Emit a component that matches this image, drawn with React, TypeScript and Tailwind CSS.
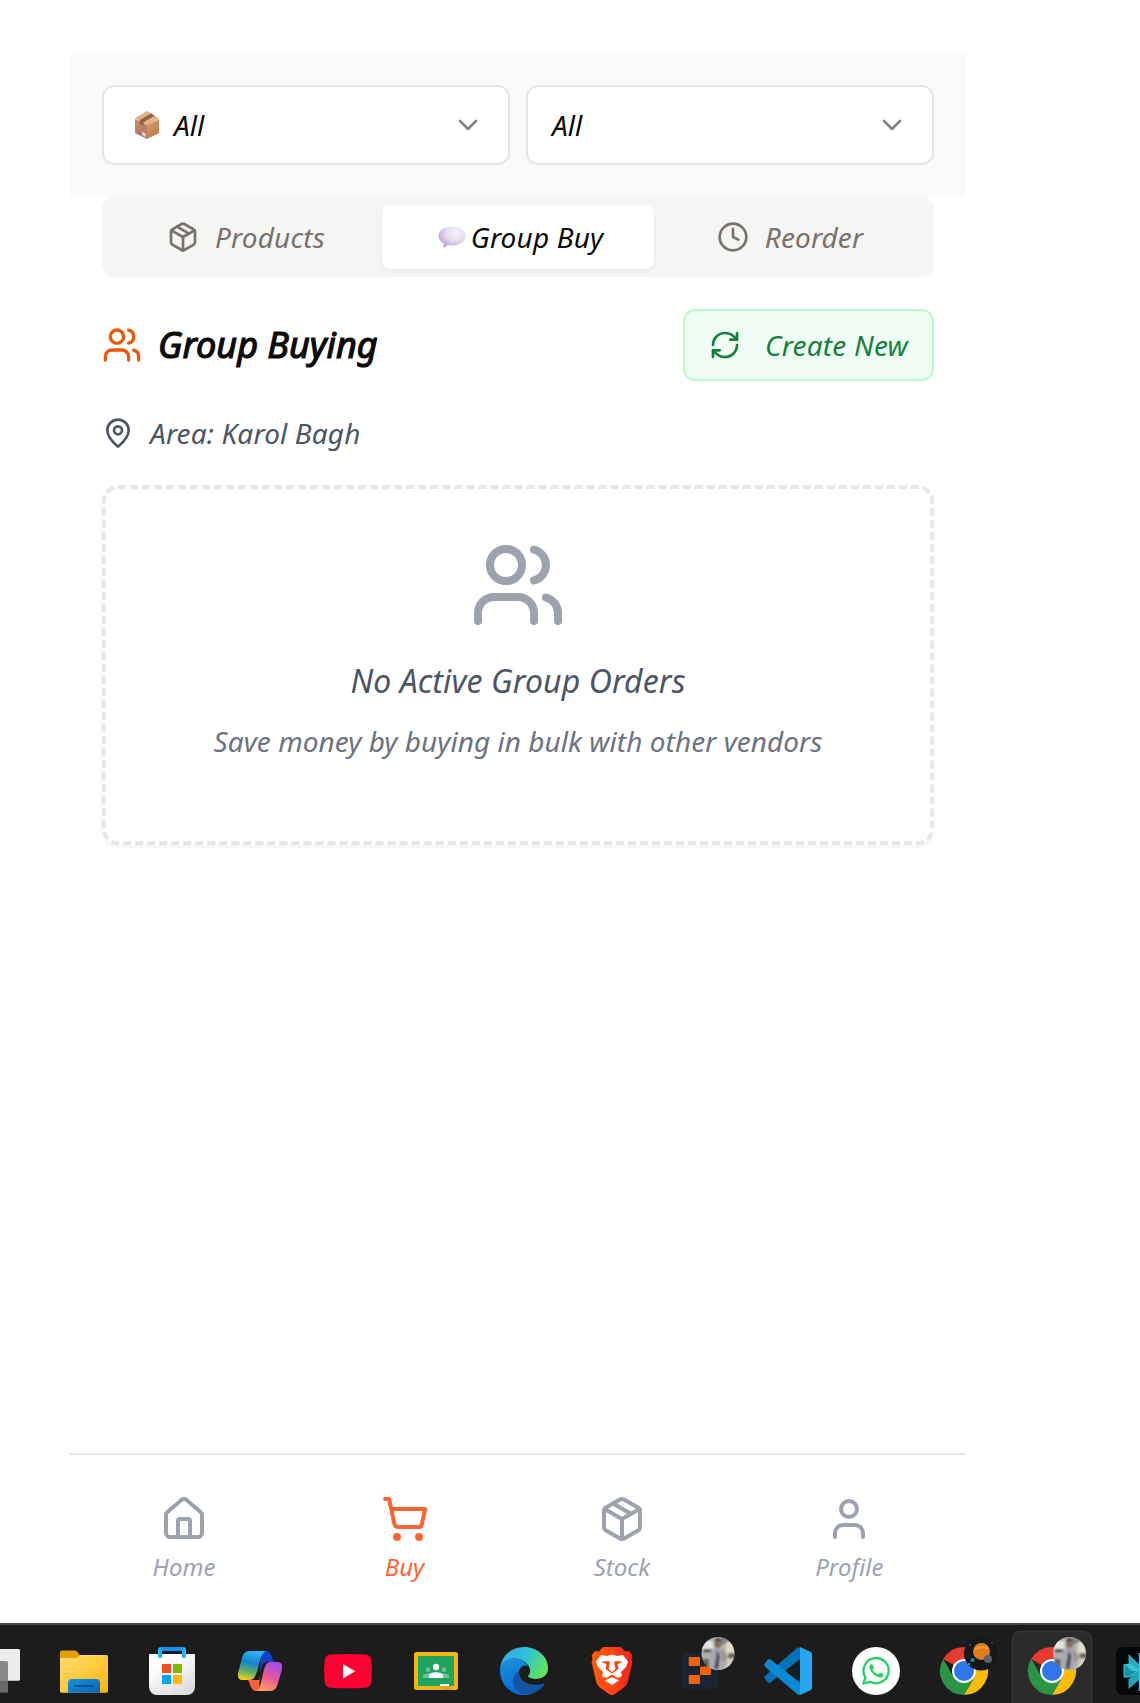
import React from "react";
import {
  ChevronDown,
  Clock,
  House,
  MapPin,
  Package,
  RefreshCw,
  ShoppingCart,
  User,
  Users,
} from "lucide-react";

function BoxEmoji() {
  return (
    <svg width="26" height="28" viewBox="0 0 26 28" className="shrink-0">
      <defs>
        <linearGradient id="boxL" x1="0" y1="0" x2="0.3" y2="1">
          <stop offset="0" stopColor="#c78f6b" />
          <stop offset="1" stopColor="#b4735a" />
        </linearGradient>
        <linearGradient id="boxR" x1="0" y1="0" x2="0.6" y2="1">
          <stop offset="0" stopColor="#d9a478" />
          <stop offset="1" stopColor="#bf7843" />
        </linearGradient>
      </defs>
      <path d="M1 8 13 14V28L1 22Z" fill="url(#boxL)" />
      <path d="M25 8 13 14V28L25 22Z" fill="url(#boxR)" />
      <path d="M13 0 25 7.2 13 14.6 1 7.2Z" fill="#dfb183" />
      <path d="M17 2.6 20.5 4.7 9.5 11.2V15L5.6 12.8V9.2Z" fill="#8f604d" />
      <path d="M8 20.5 12 22.5V26.3L8 24.3Z" fill="#d9c7dc" />
    </svg>
  );
}

function SpeechEmoji() {
  return (
    <svg width="28" height="22" viewBox="0 0 28 22" className="shrink-0">
      <defs>
        <radialGradient id="bubble" cx="0.65" cy="0.3" r="0.75">
          <stop offset="0" stopColor="#f6f2fa" />
          <stop offset="0.5" stopColor="#e6deef" />
          <stop offset="1" stopColor="#b3a0d0" />
        </radialGradient>
      </defs>
      <path
        d="M14 .5C21.5 .5 27.5 4.500 27.500 10S21.500 19.500 14 19.500C12.500 19.500 11 19.400 9.800 19.100 8.500 20.500 6.800 21.500 5.200 21.700 5.700 20 5.800 18.500 5.500 17.300 2.500 15.700.5 13.100.5 10 .5 4.500 6.500.5 14 .5Z"
        fill="url(#bubble)"
      />
    </svg>
  );
}

function Select({ label, icon }: { label: string; icon?: React.ReactNode }) {
  return (
    <button className="flex h-20 flex-1 items-center justify-between rounded-xl border-2 border-[#e7e5e4] bg-white px-6 text-[#0c0a09]">
      <span className="flex items-center">
        {icon && <span className="mr-[14px] ml-[6px]">{icon}</span>}
        {label}
      </span>
      <ChevronDown size={32} className="opacity-50" />
    </button>
  );
}

const navItems = [
  { label: "Home", Icon: House, cls: "text-[#9ca3af]" },
  { label: "Buy", Icon: ShoppingCart, cls: "text-[#ff6332]" },
  { label: "Stock", Icon: Package, cls: "text-[#9ca3af]" },
  { label: "Profile", Icon: User, cls: "text-[#9ca3af]" },
];

function Cell({ children }: { children: React.ReactNode }) {
  return (
    <svg width="88" height="78" viewBox="0 2 88 78" className="shrink-0">
      {children}
    </svg>
  );
}

function TaskView() {
  return (
    <Cell>
      <rect x="30" y="26" width="38" height="31.700" rx="1.500" fill="#ececec" />
      <rect x="20" y="38" width="36" height="31.700" rx="1.500" fill="#777" fillOpacity=".85" />
    </Cell>
  );
}

function Explorer() {
  return (
    <Cell>
      <defs>
        <linearGradient id="fold" x1="0" y1="0" x2="1" y2="1">
          <stop offset="0" stopColor="#ffda70" />
          <stop offset="0.5" stopColor="#ffcb3d" />
          <stop offset="1" stopColor="#f6b40c" />
        </linearGradient>
        <linearGradient id="foldB" x1="0" y1="0" x2="1" y2="1">
          <stop offset="0" stopColor="#1493e3" />
          <stop offset="1" stopColor="#0b63b5" />
        </linearGradient>
      </defs>
      <path d="M20 29a1.500 1.500 0 0 1 1.500-1.500H35c3 0 3 4.500 6 4.500V40H20Z" fill="#e0a00a" />
      <path d="M20 35H36c2 0 3-3 5-3H66.500A1.500 1.500 0 0 1 68 33.500V68.200A1.500 1.500 0 0 1 66.500 69.700H21.500A1.500 1.500 0 0 1 20 68.200Z" fill="url(#fold)" />
      <path d="M28 69.700V60a4 4 0 0 1 4-4H56a4 4 0 0 1 4 4V69.700Z" fill="url(#foldB)" />
      <path d="M34 63H53.700" stroke="#084f91" strokeWidth="2" />
    </Cell>
  );
}

function Store() {
  return (
    <Cell>
      <defs>
        <linearGradient id="bag" x1="0" y1="0" x2="0.6" y2="1">
          <stop offset="0.3" stopColor="#fff" />
          <stop offset="1" stopColor="#dedede" />
        </linearGradient>
        <linearGradient id="handle" x1="0" x2="1" y1="0" y2="0">
          <stop offset="0" stopColor="#2dc5f7" />
          <stop offset="0.2" stopColor="#1191e8" />
          <stop offset="0.8" stopColor="#1191e8" />
          <stop offset="1" stopColor="#2dc5f7" />
        </linearGradient>
      </defs>
      <path d="M22 31H66a1 1 0 0 1 1 1V64a8 8 0 0 1-8 8H29a8 8 0 0 1-8-8V32a1 1 0 0 1 1-1Z" fill="url(#bag)" />
      <path d="M30 34.700V27a3 3 0 0 1 3-3H55a3 3 0 0 1 3 3V34.700H54V28H34V34.700Z" fill="url(#handle)" />
      <rect x="34" y="41" width="9" height="9" fill="#f25022" />
      <rect x="45" y="41" width="9" height="9" fill="#7fba00" />
      <rect x="34" y="52" width="9" height="9" fill="#00a4ef" />
      <rect x="45" y="52" width="9" height="9" fill="#ffb900" />
    </Cell>
  );
}

function Copilot() {
  return (
    <Cell>
      <defs>
        <linearGradient id="cpA" x1="0.5" y1="0" x2="0.3" y2="1">
          <stop offset="0" stopColor="#2fb4f5" />
          <stop offset="0.4" stopColor="#1684cf" />
          <stop offset="0.7" stopColor="#56b069" />
          <stop offset="1" stopColor="#f4d012" />
        </linearGradient>
        <linearGradient id="cpB" x1="0.7" y1="0" x2="0.3" y2="1">
          <stop offset="0" stopColor="#a44df0" />
          <stop offset="0.5" stopColor="#e8559b" />
          <stop offset="1" stopColor="#ffa057" />
        </linearGradient>
      </defs>
      <path d="M45 28H50C55 28 55 32 57 37 57.500 38.500 58.500 39 60 39H51C46 39 46 44 44 50Z" fill="#1540c8" />
      <path d="M32 57C34 60 35 68 40 68H47C42 68 43 58 45 50L43 57Z" fill="#f7603c" />
      <path d="M34 28H52C46 28 44.500 35 42 45 39.500 54 38 57 33 57H27C22 57 21 54 22.500 48L26 35C27.500 30 29.500 28 34 28Z" fill="url(#cpA)" />
      <path d="M40 68C43 68 44.500 62 46.500 53 48.500 43 50 39 55 39H61C66 39 67 42 65.500 48L62 60C60.500 66 58 68 54 68Z" fill="url(#cpB)" />
    </Cell>
  );
}

function YouTube() {
  return (
    <Cell>
      <path d="M27 31.400Q44 30.400 61 31.400 66.700 31.800 67.300 37 68.600 48 67.300 59.500 66.700 64.300 61 64.700 44 65.700 27 64.700 21.300 64.300 20.700 59.500 19.400 48 20.700 37 21.300 31.800 27 31.400Z" fill="#ff0033" />
      <path d="M39 41V55.500L51.300 48.200Z" fill="#fff" />
    </Cell>
  );
}

function Classroom() {
  return (
    <Cell>
      <rect x="22" y="29" width="44" height="38" rx="2.500" fill="#f5b70f" />
      <rect x="26" y="33" width="36" height="30" fill="#21a261" />
      <g fill="#6fc497">
        <circle cx="36" cy="46.800" r="2.200" />
        <circle cx="52" cy="46.800" r="2.200" />
        <path d="M31 55V53.500C31 51 34 50.500 36 50.500S41 51 41 53.500V55ZM47 55V53.500C47 51 50 50.500 52 50.500S57 51 57 53.500V55Z" />
      </g>
      <circle cx="44" cy="44" r="3.200" fill="#fff" />
      <path d="M37 55V53C37 50 41 49.300 44 49.300S51 50 51 53V55Z" fill="#fff" />
      <path d="M48 63H57L61 67H52Z" fill="#e2a30c" />
      <rect x="48" y="61" width="9" height="2" fill="#fff" />
    </Cell>
  );
}

function Edge() {
  return (
    <Cell>
      <defs>
        <linearGradient id="edT" x1="0" y1="0.2" x2="1" y2="0.6">
          <stop offset="0" stopColor="#31a8f0" />
          <stop offset="0.5" stopColor="#2fc3d3" />
          <stop offset="1" stopColor="#63e457" />
        </linearGradient>
        <linearGradient id="edB" x1="0" y1="0" x2="0.4" y2="1">
          <stop offset="0" stopColor="#1d92df" />
          <stop offset="1" stopColor="#0669cf" />
        </linearGradient>
      </defs>
      <path d="M20 47C20 41 26 35.500 34 35.500 44 35.500 49 41 48 47L36 62C40 70 50 72 56 69 52 71.500 48 72 44 72 31 72 20 62 20 47Z" fill="url(#edB)" />
      <path d="M38 48C31 53 31 64 39 69 48 74 60 69 64.300 61.500 65 60 64 59.500 63 60 50 64.500 40 58 39 50Z" fill="#1254a1" />
      <path d="M20.100 46C21 33 31 24 44 24 58 24 68 34 68 45 68 52 63 56 56 56 51 56 48 54.500 48 53 48 52 50 51 50 48 50 41 43 35.500 35 35.500 27 35.500 21 40 20.100 46Z" fill="url(#edT)" />
      <path d="M39 50C39 46 41.500 43 45 42.500 48 42.500 50 45 50 48 50 51 48 52 48 53 47.500 55 52 56 56 56 60 56 64 54.500 66 52L65 60C52 64 40 60 39 50Z" fill="#1c1c1c" />
    </Cell>
  );
}

function Brave() {
  return (
    <Cell>
      <defs>
        <linearGradient id="brv" x1="0" x2="1" y1="0" y2="0">
          <stop offset="0" stopColor="#ff5a08" />
          <stop offset="0.5" stopColor="#ff4514" />
          <stop offset="1" stopColor="#f0201c" />
        </linearGradient>
      </defs>
      <path d="M35 24H53L57 28.500 61 28 64.500 32.500 63.500 36 64.500 39 60 58C59 62 57 64 54 66L47 71Q44 73 41 71L34 66C31 64 29 62 28 58L23.500 39 24.500 36 23.500 32.500 27 28 31 28.500Z" fill="url(#brv)" />
      <path d="M33 32 39 33 44 31.500 49 33 55 32 60 38.500 58 44 53 49 54 53 50 55 44 51.500 38 55 34 53 35 49 30 44 28 38.500Z" fill="#fff" />
      <path d="M44 54 51 57.500 44 62 37 57.500Z" fill="#fff" />
      <path d="M33 39 40 38 42 39 40.500 46 44 49 47.500 46 46 39 48 38 55 39 49.500 41 50.500 46 44 50.500 37.500 46 38.500 41Z" fill="#fb4216" />
    </Cell>
  );
}

function PhotoBadge({ id, cx }: { id: string; cx: number }) {
  return (
    <g>
      <clipPath id={id}>
        <circle cx={cx} cy="30.500" r="16.500" />
      </clipPath>
      <filter id={`${id}-soft`}>
        <feGaussianBlur stdDeviation="0.8" />
      </filter>
      <g clipPath={`url(#${id})`}>
        <rect x={cx - 17} y="13" width="34" height="35" fill="#b3b2ad" />
        <g filter={`url(#${id}-soft)`}>
          <rect x={cx - 17} y="18" width="12" height="10" fill="#e4e6df" />
          <rect x={cx - 15} y="26" width="9" height="3" fill="#3f4446" />
          <rect x={cx - 17} y="36" width="9" height="12" fill="#5e6364" />
          <rect x={cx + 3} y="13" width="9" height="8" fill="#7b847f" />
          <rect x={cx + 8} y="19" width="9" height="14" fill="#e0dccb" />
          <rect x={cx + 10} y="30" width="7" height="5" fill="#6c6458" />
          <rect x={cx + 7} y="36" width="10" height="12" fill="#d6cdc1" />
          <path d={`M${cx - 9} 48V31Q${cx - 5} 25 ${cx} 25T${cx + 9} 32V41L${cx + 5} 48Z`} fill="#a7abb3" />
          <ellipse cx={cx} cy="20.500" rx="3.500" ry="5" fill="#86695f" />
          <path d={`M${cx - 4} 18Q${cx} 12 ${cx + 4} 18`} fill="#3c3839" />
          <path d={`M${cx - 1} 27L${cx + 2} 33L${cx} 46H${cx - 4}L${cx - 2} 34Z`} fill="#4f4a55" />
          <path d={`M${cx + 3} 28L${cx + 7} 33L${cx + 5} 38`} stroke="#a0796c" strokeWidth="2" fill="none" />
        </g>
      </g>
    </g>
  );
}

function Replit() {
  return (
    <Cell>
      <rect x="26" y="30" width="36" height="36" rx="3" fill="#1c2333" />
      <g fill="#f26207">
        <rect x="32.700" y="34" width="11.300" height="9" rx="1" />
        <rect x="44" y="43.500" width="11" height="8.500" rx="1" />
        <rect x="32.700" y="52" width="11.300" height="9" rx="1" />
      </g>
      <PhotoBadge id="pbA" cx={62} />
    </Cell>
  );
}

function VsCode() {
  return (
    <Cell>
      <path d="M20.500 55 24 59.500Q25 60.500 26.500 59.500L56 36V24.500Q54 24 52.500 25.500L20.800 53Q20 54 20.500 55Z" fill="#0872b8" />
      <path d="M20.500 41 24 36.500Q25 35.500 26.500 36.500L56 59.500V72Q54 72 52.500 70.500L20.800 43.500Q20 42.500 20.500 41Z" fill="#0a8bd3" />
      <path d="M56 24 66.500 28.700Q68 29.500 68 31V65Q68 66.500 66.500 67.300L56 72Z" fill="#25a7f0" />
    </Cell>
  );
}

function WhatsApp() {
  return (
    <Cell>
      <circle cx="44" cy="48" r="24" fill="#fff" />
      <path d="M31.300 60.500 33.500 54.500A12.600 12.600 0 1 1 38.200 58.800Z" fill="none" stroke="#25d366" strokeWidth="2.300" strokeLinejoin="round" />
      <path d="M39.500 41C38 41.500 36.800 43.500 37.600 45.600 39.500 50.500 43 53.300 47.200 54.600 49 55 51.200 54 51.600 51.600Q51.700 51 48 49.400C47.300 49.300 46.700 51.300 45.900 51.200 43.500 50.500 41.700 48.500 40.700 46.500 40.800 45.700 42 45 41.900 44.400Q40.500 40.800 39.500 41Z" fill="#25d366" />
    </Cell>
  );
}

function ChromeLogo() {
  return (
    <g>
      <path d="M44 48 23.200 36A24 24 0 0 1 64.800 36Z" fill="#e33b2e" />
      <path d="M44 36H64.800A24 24 0 0 1 44 72L54.400 54Z" fill="#fbbc09" />
      <path d="M33.600 54 23.200 36A24 24 0 0 0 44 72L54.400 54Z" fill="#2a9547" />
      <circle cx="44" cy="48" r="12" fill="#fff" />
      <circle cx="44" cy="48" r="10" fill="#2f77ea" />
    </g>
  );
}

function ChromeSpace() {
  return (
    <Cell>
      <ChromeLogo />
      <circle cx="61" cy="30.500" r="17" fill="#15181c" />
      <circle cx="61.500" cy="28.500" r="8.500" fill="#e07d18" />
      <path d="M54.500 26Q61 23 68.500 25.500" stroke="#f39a32" strokeWidth="2" fill="none" />
      <circle cx="68" cy="36" r="4" fill="#59636c" />
      <circle cx="52.500" cy="37" r="2" fill="#188f99" />
      <circle cx="49" cy="41" r="1" fill="#2cc6d0" />
      <circle cx="50" cy="22" r=".8" fill="#7c858c" />
      <circle cx="72" cy="20" r=".8" fill="#5c656c" />
    </Cell>
  );
}

function ChromeActive() {
  return (
    <Cell>
      <rect x="4.500" y="8.500" width="79" height="90" rx="8" fill="#2b2b2b" stroke="#363636" strokeWidth="1.500" />
      <ChromeLogo />
      <PhotoBadge id="pbB" cx={61.5} />
    </Cell>
  );
}

function Perplexity() {
  return (
    <Cell>
      <rect x="20" y="24" width="48" height="48" rx="7" fill="#050708" />
      <path d="M32.500 31 43 41V50L32.500 42Z" fill="#2aa9ba" />
      <path d="M28 41H36L44 48 38 54H28Z" fill="#1b93a4" />
      <path d="M28 41H36L44 48H36Z" fill="#35c4d2" />
      <path d="M32.500 56 43 48V57L32.500 66Z" fill="#23a3b4" />
      <path d="M28 41.500V54H33L43 47" stroke="#39c8d6" strokeWidth="1" fill="none" />
      <path d="M43.500 30V68" stroke="#39c8d6" strokeWidth="1.500" />
    </Cell>
  );
}

export default function App() {
  return (
    <div className="flex h-[1703px] w-[1140px] flex-col overflow-hidden bg-white font-['Noto_Sans',sans-serif] text-[28px] leading-10 whitespace-nowrap italic">
      <main className="ml-[70px] flex w-[896px] flex-1 flex-col pt-[53px]">
        <div className="flex gap-4 bg-[#f9fafb] p-8">
          <Select label="All" icon={<BoxEmoji />} />
          <Select label="All" />
        </div>

        <div className="flex flex-col px-8">
          <div className="grid h-20 grid-cols-[272px_272px_272px] rounded-xl bg-[#f5f5f4] p-2 text-[#78716c]">
            <div className="flex items-center justify-center gap-4">
              <Package size={32} />
              <span className="tracking-[0.15px]">Products</span>
            </div>
            <div className="flex items-center justify-center gap-[5px] rounded-lg bg-white pl-[5px] text-[#0c0a09] shadow-[0_2px_4px_rgba(0,0,0,0.05)]">
              <SpeechEmoji />
              <span className="tracking-[0.15px]">Group Buy</span>
            </div>
            <div className="flex items-center justify-center gap-4">
              <Clock size={32} />
              <span className="tracking-[0.1px]">Reorder</span>
            </div>
          </div>

          <div className="mt-8 flex items-center justify-between">
            <h1 className="flex items-center gap-4 text-[36px] font-normal text-[#0c0a09] [-webkit-text-stroke:1.2px_#0c0a09]">
              <Users size={40} className="text-[#ea580c]" />
              Group Buying
            </h1>
            <button className="flex h-[72px] items-center gap-6 rounded-xl border-2 border-[#bbf7d0] bg-[#f0fdf4] px-6 text-[#15803d]">
              <RefreshCw size={32} />
              <span className="tracking-[0.2px]">Create New</span>
            </button>
          </div>

          <div className="mt-8 flex h-10 items-center gap-4 text-[#4b5563]">
            <MapPin size={32} />
            <span className="tracking-[0.14px]">Area: Karol Bagh</span>
          </div>

          <section className="mt-8 flex h-[360px] flex-col items-center rounded-2xl border-4 border-dashed border-[#e5e7eb] bg-white pt-12 shadow-[0_2px_4px_rgba(0,0,0,0.05)]">
            <Users size={96} className="text-[#9ca3af]" />
            <h2 className="mt-6 text-[32px] leading-[48px] tracking-[0.1px] text-[#4b5563]">No Active Group Orders</h2>
            <p className="mt-4 tracking-[0.04px] text-[#6b7280]">Save money by buying in bulk with other vendors</p>
          </section>
        </div>

        <nav className="mt-auto flex h-[170px] items-start justify-around border-t-2 border-[#e5e7eb] pt-10">
          {navItems.map(({ label, Icon, cls }) => (
            <div key={label} className={`flex flex-col items-center text-[24px] ${cls}`}>
              <Icon size={48} />
              <span className="mt-2 leading-8">{label}</span>
            </div>
          ))}
        </nav>
      </main>

      <footer className="flex h-20 shrink-0 overflow-hidden border-t-2 border-[#464646] bg-[#1c1c1c]">
        <div className="-ml-12 flex shrink-0">
          <TaskView />
          <Explorer />
          <Store />
          <Copilot />
          <YouTube />
          <Classroom />
          <Edge />
          <Brave />
          <Replit />
          <VsCode />
          <WhatsApp />
          <ChromeSpace />
          <ChromeActive />
          <Perplexity />
        </div>
      </footer>
    </div>
  );
}
